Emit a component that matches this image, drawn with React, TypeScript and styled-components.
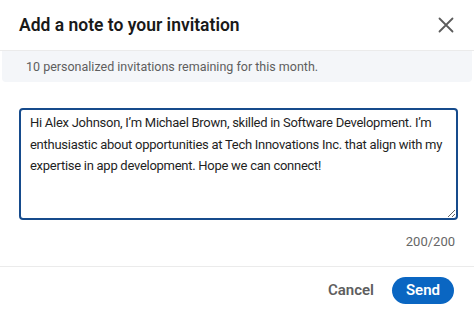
import React from "react";
import styled, { createGlobalStyle } from "styled-components";

const GlobalStyle = createGlobalStyle`
  html, body {
    margin: 0;
    padding: 0;
    background: #ffffff;
  }
  body {
    font-family: Roboto, "Liberation Sans", Arial, sans-serif;
    -webkit-font-smoothing: antialiased;
  }
`;

const Dialog = styled.div`
  width: 474px;
  height: 313px;
  display: flex;
  flex-direction: column;
  background: #ffffff;
  box-sizing: border-box;
`;

const Header = styled.header`
  height: 51px;
  display: flex;
  align-items: center;
  justify-content: space-between;
  padding: 0 16px 0 19px;
  border-bottom: 1px solid #ebebeb;
  box-sizing: border-box;
`;

const Title = styled.h2`
  margin: 0;
  font-size: 17.5px;
  font-weight: 600;
  color: #191919;
`;

const CloseButton = styled.button`
  width: 24px;
  height: 24px;
  padding: 0;
  border: none;
  background: none;
  display: flex;
  align-items: center;
  justify-content: center;
  color: #5c5c5c;
  cursor: pointer;
`;

const Notice = styled.div`
  margin: 0 2px;
  height: 31px;
  display: flex;
  align-items: center;
  padding-left: 24px;
  background: #f4f6f9;
  border-radius: 0 0 4px 4px;
  font-size: 12.5px;
  color: #5e5e5e;
`;

const Body = styled.div`
  display: flex;
  flex-direction: column;
  padding: 26px 16px 0 19px;
`;

const NoteField = styled.textarea`
  height: 112px;
  box-sizing: border-box;
  border: 2px solid #164b8c;
  border-radius: 4px;
  padding: 2px 6px 2px 9px;
  font-family: Roboto, "Liberation Sans", Arial, sans-serif;
  font-size: 13px;
  line-height: 21.5px;
  letter-spacing: -0.27px;
  color: #1f1f1f;
  outline: none;
  resize: vertical;
`;

const Counter = styled.div`
  align-self: flex-end;
  margin: 14px 3px 0 0;
  font-size: 13px;
  color: #666666;
`;

const Footer = styled.footer`
  margin-top: auto;
  height: 46px;
  display: flex;
  align-items: center;
  justify-content: flex-end;
  gap: 18px;
  padding: 0 20px 0 0;
  border-top: 1px solid #ebebeb;
`;

const ActionButton = styled.button<{ $primary?: boolean }>`
  height: 27px;
  padding: ${({ $primary }) => ($primary ? "0 14px" : "0")};
  border: none;
  border-radius: 14px;
  background: ${({ $primary }) => ($primary ? "#0a66c2" : "transparent")};
  color: ${({ $primary }) => ($primary ? "#ffffff" : "#5e5e5e")};
  font-family: Roboto, "Liberation Sans", Arial, sans-serif;
  font-size: 15px;
  font-weight: 600;
  cursor: pointer;
`;

const CloseIcon = () => (
  <svg width="16" height="16" viewBox="0 0 16 16" fill="none">
    <path
      d="M1.5 1.5 L14.5 14.5 M14.5 1.5 L1.5 14.5"
      stroke="currentColor"
      strokeWidth="1.8"
      strokeLinecap="round"
    />
  </svg>
);

const message =
  "Hi Alex Johnson, I\u2019m Michael Brown, skilled in Software Development. I\u2019m enthusiastic about opportunities at Tech Innovations Inc. that align with my expertise in app development. Hope we can connect!";

export default function App() {
  return (
    <>
      <GlobalStyle />
      <Dialog>
        <Header>
          <Title>Add a note to your invitation</Title>
          <CloseButton aria-label="Dismiss">
            <CloseIcon />
          </CloseButton>
        </Header>
        <Notice>10 personalized invitations remaining for this month.</Notice>
        <Body>
          <NoteField readOnly defaultValue={message} />
          <Counter>200/200</Counter>
        </Body>
        <Footer>
          <ActionButton>Cancel</ActionButton>
          <ActionButton $primary>Send</ActionButton>
        </Footer>
      </Dialog>
    </>
  );
}
